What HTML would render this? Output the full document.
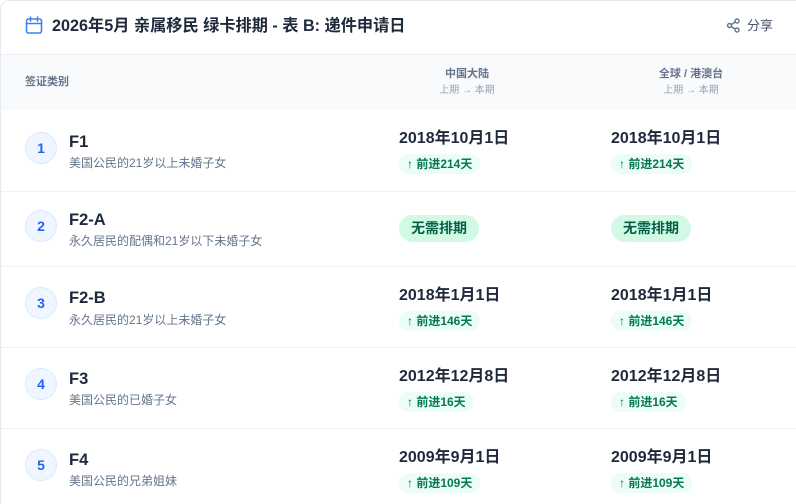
<!DOCTYPE html>
<html><head><meta charset="utf-8"><style>
*{margin:0;padding:0;box-sizing:border-box}
html,body{width:796px;height:504px;overflow:hidden}
body{background:#fff;font-family:"Liberation Sans","Noto Sans CJK SC",sans-serif;position:relative}
.card{position:absolute;left:0;top:0;width:796px;height:504px;border:1px solid #e5e9f0;border-right:none;border-bottom:none;border-radius:10px 0 0 0;background:#fff}
.abs{position:absolute}
.title{left:52px;top:14px;font-size:16.2px;font-weight:bold;color:#1e293b;line-height:24px}
.share{left:747px;top:16px;font-size:13px;color:#475569;line-height:20px}
.thead{left:1px;top:54px;width:795px;height:56px;background:#f8fafc;border-top:1px solid #eef1f5}
.th{font-size:11px;font-weight:bold;color:#64748b;line-height:14px}
.sub{font-size:10px;color:#94a3b8;line-height:12px}
.sep{left:1px;width:795px;height:1px;background:#eef1f5}
.circ{left:25px;width:32px;height:32px;border-radius:50%;background:#eff6ff;border:1px solid #dbeafe;color:#2563eb;font-weight:bold;font-size:14px;text-align:center;line-height:30px}
.code{left:69px;font-size:16.5px;font-weight:bold;color:#1e293b;line-height:20px}
.desc{left:69px;font-size:12px;color:#64748b;line-height:16px}
.date{font-size:16px;font-weight:bold;color:#1e293b;line-height:20px}
.badge{height:20px;border-radius:10px;background:#ecfdf5;color:#047857;font-size:12px;font-weight:bold;line-height:20px;padding:0 8px}
.pill{height:27px;border-radius:14px;background:#d1fae5;color:#065f46;font-size:14px;font-weight:bold;line-height:27px;padding:0 12px}
</style></head><body><div class="card"></div>
<svg class="abs" style="left:25px;top:16px" width="18" height="19" viewBox="0 0 18 19" fill="none" stroke="#3b82f6" stroke-width="1.6" stroke-linecap="round"><rect x="1.5" y="3" width="15" height="14" rx="2"/><path d="M1.5 7.5h15M5.5 1v4M12.5 1v4"/></svg>
<div class="abs title">2026年5月 亲属移民 绿卡排期 - 表 B: 递件申请日</div>
<svg class="abs" style="left:726px;top:18px" width="15" height="15" viewBox="0 0 15 15" fill="none" stroke="#64748b" stroke-width="1.4"><circle cx="11" cy="3" r="2"/><circle cx="3.5" cy="7.5" r="2"/><circle cx="11" cy="12" r="2"/><path d="M5.3 6.5L9.2 4M5.3 8.5L9.2 11"/></svg>
<div class="abs share">分享</div>
<div class="abs thead"></div>
<div class="abs th" style="left:25px;top:75px">签证类别</div>
<div class="abs th" style="left:417px;width:100px;text-align:center;top:67px">中国大陆</div>
<div class="abs sub" style="left:417px;width:100px;text-align:center;top:85px">上期 → 本期</div>
<div class="abs th" style="left:641px;width:100px;text-align:center;top:67px">全球 / 港澳台</div>
<div class="abs sub" style="left:641px;width:100px;text-align:center;top:85px">上期 → 本期</div>

<div class="abs circ" style="top:132px">1</div>
<div class="abs code" style="top:132px">F1</div>
<div class="abs desc" style="top:155px">美国公民的21岁以上未婚子女</div>
<div class="abs date" style="left:399px;top:129px">2018年10月1日</div>
<div class="abs badge" style="left:399px;top:154px">↑ 前进214天</div>
<div class="abs date" style="left:611px;top:129px">2018年10月1日</div>
<div class="abs badge" style="left:611px;top:154px">↑ 前进214天</div>
<div class="abs sep" style="top:191px"></div>

<div class="abs circ" style="top:210px">2</div>
<div class="abs code" style="top:210px">F2-A</div>
<div class="abs desc" style="top:233px">永久居民的配偶和21岁以下未婚子女</div>
<div class="abs pill" style="left:399px;top:215px">无需排期</div>
<div class="abs pill" style="left:611px;top:215px">无需排期</div>
<div class="abs sep" style="top:266px"></div>

<div class="abs circ" style="top:287px">3</div>
<div class="abs code" style="top:288px">F2-B</div>
<div class="abs desc" style="top:312px">永久居民的21岁以上未婚子女</div>
<div class="abs date" style="left:399px;top:286px">2018年1月1日</div>
<div class="abs badge" style="left:399px;top:311px">↑ 前进146天</div>
<div class="abs date" style="left:611px;top:286px">2018年1月1日</div>
<div class="abs badge" style="left:611px;top:311px">↑ 前进146天</div>
<div class="abs sep" style="top:347px"></div>

<div class="abs circ" style="top:368px">4</div>
<div class="abs code" style="top:369px">F3</div>
<div class="abs desc" style="top:392px">美国公民的已婚子女</div>
<div class="abs date" style="left:399px;top:367px">2012年12月8日</div>
<div class="abs badge" style="left:399px;top:392px">↑ 前进16天</div>
<div class="abs date" style="left:611px;top:367px">2012年12月8日</div>
<div class="abs badge" style="left:611px;top:392px">↑ 前进16天</div>
<div class="abs sep" style="top:428px"></div>

<div class="abs circ" style="top:449px">5</div>
<div class="abs code" style="top:450px">F4</div>
<div class="abs desc" style="top:473px">美国公民的兄弟姐妹</div>
<div class="abs date" style="left:399px;top:448px">2009年9月1日</div>
<div class="abs badge" style="left:399px;top:473px">↑ 前进109天</div>
<div class="abs date" style="left:611px;top:448px">2009年9月1日</div>
<div class="abs badge" style="left:611px;top:473px">↑ 前进109天</div>
</body></html>
